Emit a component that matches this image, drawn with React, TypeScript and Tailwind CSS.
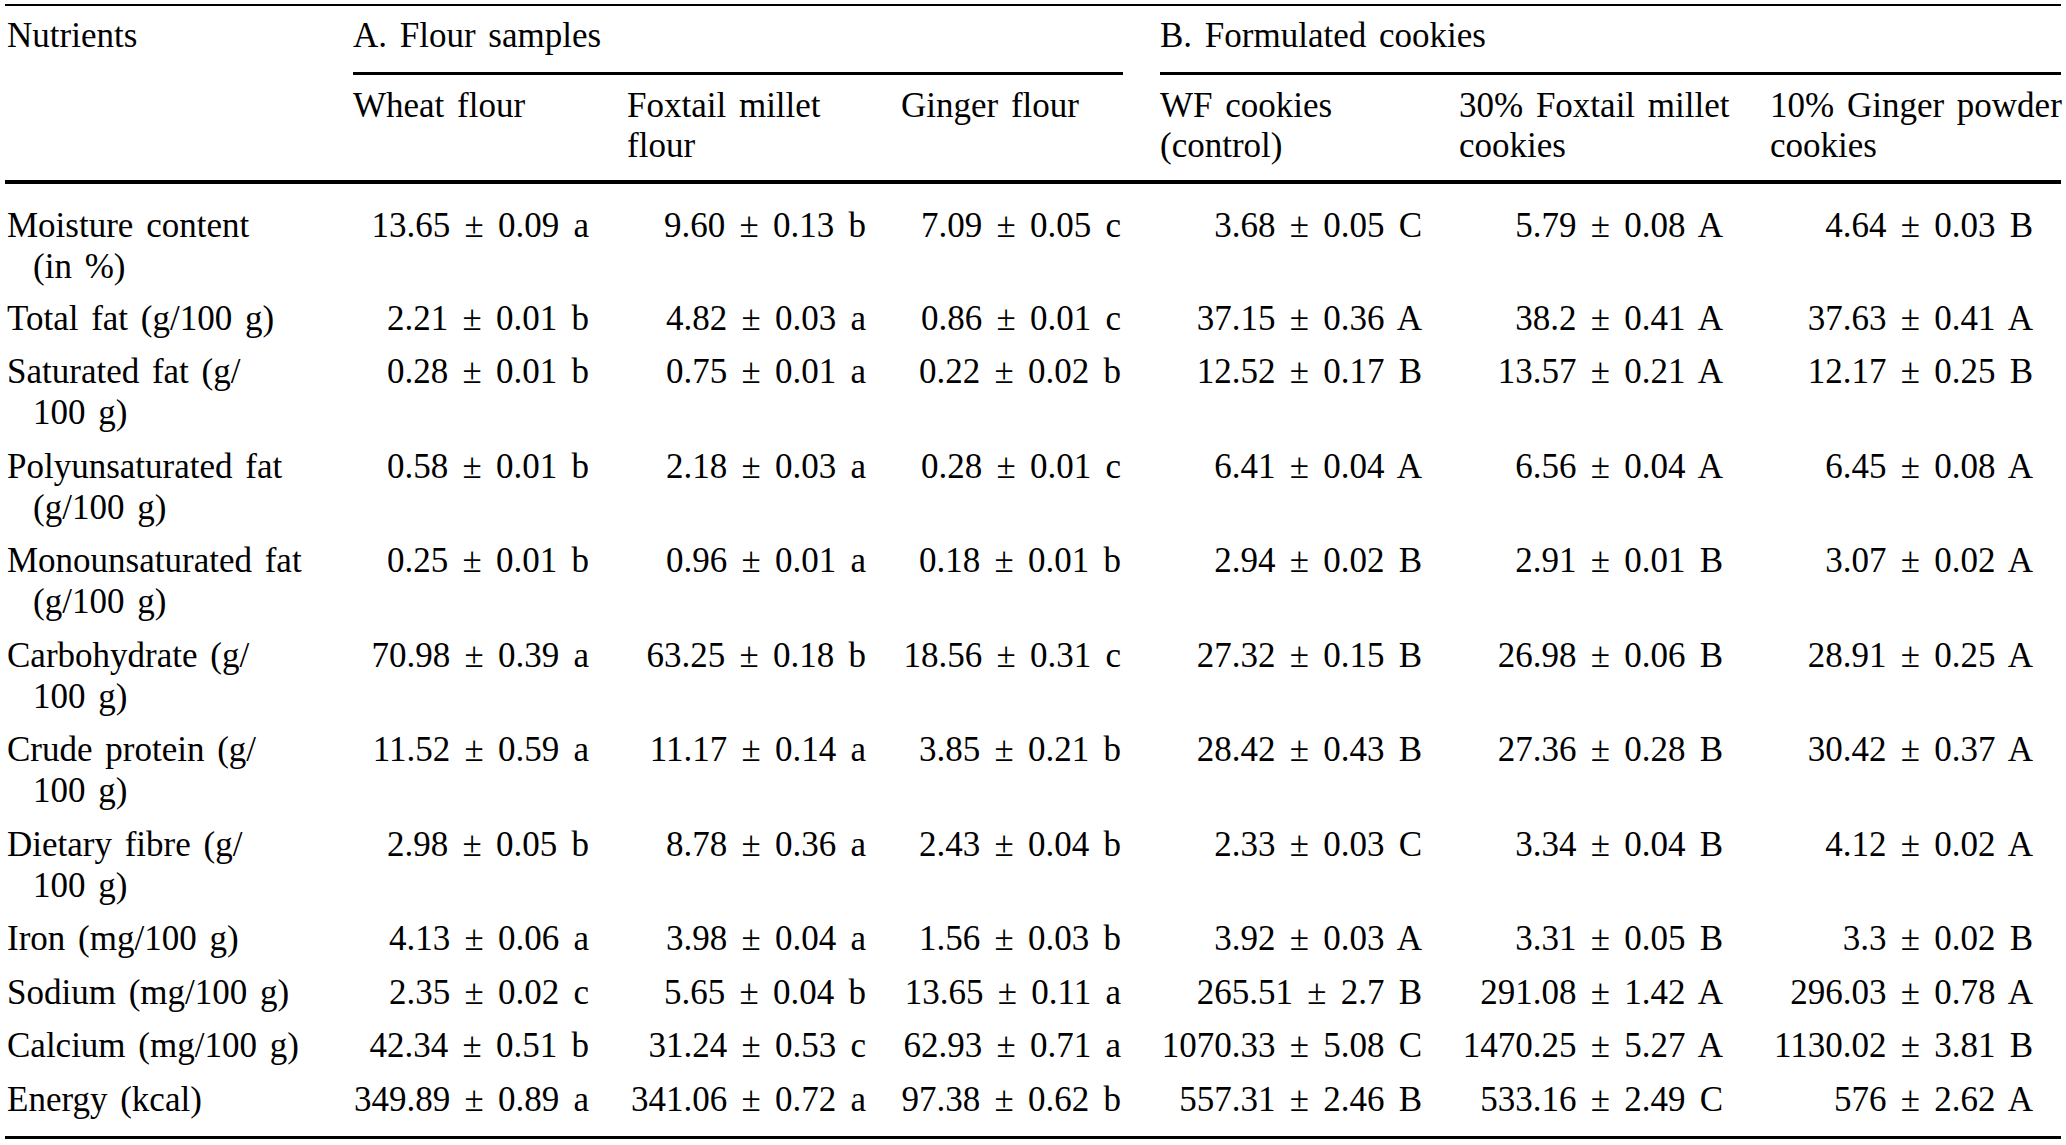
const cols = 'grid grid-cols-[348px_274px_274px_259px_299px_311px_291px]'

const valuePad = ['pr-[38px]', 'pr-[35px]', 'pr-[39px]', 'pr-[37px]', 'pr-[47px]', 'pr-[28px]']

interface Row {
  label: string[]
  values: string[]
}

const rows: Row[] = [
  {
    label: ['Moisture content', '(in %)'],
    values: ['13.65 ± 0.09 a', '9.60 ± 0.13 b', '7.09 ± 0.05 c', '3.68 ± 0.05 C', '5.79 ± 0.08 A', '4.64 ± 0.03 B'],
  },
  {
    label: ['Total fat (g/100 g)'],
    values: ['2.21 ± 0.01 b', '4.82 ± 0.03 a', '0.86 ± 0.01 c', '37.15 ± 0.36 A', '38.2 ± 0.41 A', '37.63 ± 0.41 A'],
  },
  {
    label: ['Saturated fat (g/', '100 g)'],
    values: ['0.28 ± 0.01 b', '0.75 ± 0.01 a', '0.22 ± 0.02 b', '12.52 ± 0.17 B', '13.57 ± 0.21 A', '12.17 ± 0.25 B'],
  },
  {
    label: ['Polyunsaturated fat', '(g/100 g)'],
    values: ['0.58 ± 0.01 b', '2.18 ± 0.03 a', '0.28 ± 0.01 c', '6.41 ± 0.04 A', '6.56 ± 0.04 A', '6.45 ± 0.08 A'],
  },
  {
    label: ['Monounsaturated fat', '(g/100 g)'],
    values: ['0.25 ± 0.01 b', '0.96 ± 0.01 a', '0.18 ± 0.01 b', '2.94 ± 0.02 B', '2.91 ± 0.01 B', '3.07 ± 0.02 A'],
  },
  {
    label: ['Carbohydrate (g/', '100 g)'],
    values: ['70.98 ± 0.39 a', '63.25 ± 0.18 b', '18.56 ± 0.31 c', '27.32 ± 0.15 B', '26.98 ± 0.06 B', '28.91 ± 0.25 A'],
  },
  {
    label: ['Crude protein (g/', '100 g)'],
    values: ['11.52 ± 0.59 a', '11.17 ± 0.14 a', '3.85 ± 0.21 b', '28.42 ± 0.43 B', '27.36 ± 0.28 B', '30.42 ± 0.37 A'],
  },
  {
    label: ['Dietary fibre (g/', '100 g)'],
    values: ['2.98 ± 0.05 b', '8.78 ± 0.36 a', '2.43 ± 0.04 b', '2.33 ± 0.03 C', '3.34 ± 0.04 B', '4.12 ± 0.02 A'],
  },
  {
    label: ['Iron (mg/100 g)'],
    values: ['4.13 ± 0.06 a', '3.98 ± 0.04 a', '1.56 ± 0.03 b', '3.92 ± 0.03 A', '3.31 ± 0.05 B', '3.3 ± 0.02 B'],
  },
  {
    label: ['Sodium (mg/100 g)'],
    values: ['2.35 ± 0.02 c', '5.65 ± 0.04 b', '13.65 ± 0.11 a', '265.51 ± 2.7 B', '291.08 ± 1.42 A', '296.03 ± 0.78 A'],
  },
  {
    label: ['Calcium (mg/100 g)'],
    values: ['42.34 ± 0.51 b', '31.24 ± 0.53 c', '62.93 ± 0.71 a', '1070.33 ± 5.08 C', '1470.25 ± 5.27 A', '1130.02 ± 3.81 B'],
  },
  {
    label: ['Energy (kcal)'],
    values: ['349.89 ± 0.89 a', '341.06 ± 0.72 a', '97.38 ± 0.62 b', '557.31 ± 2.46 B', '533.16 ± 2.49 C', '576 ± 2.62 A'],
  },
]

const subHeads: string[][] = [
  ['Wheat flour'],
  ['Foxtail millet', 'flour'],
  ['Ginger flour'],
  ['WF cookies', '(control)'],
  ['30% Foxtail millet', 'cookies'],
  ['10% Ginger powder', 'cookies'],
]

export default function App() {
  return (
    <div className="h-[1145px] w-[2066px] bg-white px-[5px] pt-[4px] font-['Liberation_Serif','Times_New_Roman',serif] text-[35px] leading-[41px] text-black [word-spacing:4px]">
      <div className="border-t-2 border-black" />

      <div className={`${cols} pt-[9px] pb-[16px]`}>
        <div className="pl-[2px]">Nutrients</div>
        <div className="col-span-3">A. Flour samples</div>
        <div className="col-span-3">B. Formulated cookies</div>
      </div>

      <div className={cols}>
        <div />
        <div className="col-span-3 mr-[37px] h-[3px] bg-black" />
        <div className="col-span-3 h-[3px] bg-black" />
      </div>

      <div className={`${cols} pt-[11px] pb-[14px] leading-[40px]`}>
        <div />
        {subHeads.map((lines, i) => (
          <div key={i}>
            {lines.map(l => (
              <div key={l} className="whitespace-nowrap">{l}</div>
            ))}
          </div>
        ))}
      </div>

      <div className="h-[4px] bg-black" />

      <div className="pt-[15px] pb-[10px]">
        {rows.map((row, idx) => (
          <div key={row.label[0]} className={`${cols} ${idx === 0 ? 'pt-[6.3px] pb-[4px]' : 'py-[6.25px]'}`}>
            <div className="pl-[2px]">
              <div className="whitespace-nowrap">{row.label[0]}</div>
              {row.label[1] && <div className="whitespace-nowrap pl-[26px]">{row.label[1]}</div>}
            </div>
            {row.values.map((v, i) => (
              <div key={i} className={`whitespace-nowrap text-right [word-spacing:5.5px] ${valuePad[i]}`}>{v}</div>
            ))}
          </div>
        ))}
      </div>

      <div className="h-[3px] bg-black" />
    </div>
  )
}
